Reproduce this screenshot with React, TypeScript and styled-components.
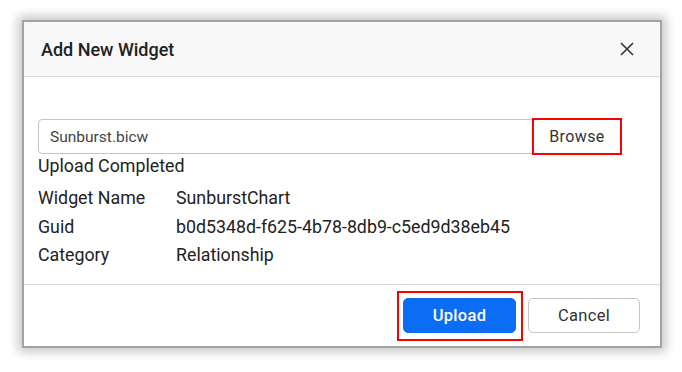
import styled, { createGlobalStyle } from 'styled-components'

const GlobalStyle = createGlobalStyle`
  html, body {
    margin: 0;
    padding: 0;
    background: #ffffff;
    font-family: Roboto, 'Liberation Sans', sans-serif;
  }
`

const Page = styled.div`
  width: 682px;
  height: 372px;
  padding: 22px 0 0 24px;
  box-sizing: border-box;
`

const Dialog = styled.div`
  width: 636px;
  height: 324px;
  background: #ffffff;
  display: flex;
  flex-direction: column;
  box-shadow: 0 0 0 2px #a3a3a3, 0 0 10px 6px rgba(0, 0, 0, 0.22);
`

const Header = styled.div`
  height: 55px;
  flex: 0 0 auto;
  background: #f8f8f8;
  border-bottom: 1px solid #d6d6d6;
  display: flex;
  align-items: center;
  justify-content: space-between;
  padding: 0 26px 0 17px;
  box-sizing: border-box;
`

const Title = styled.h2`
  margin: 0;
  font-size: 18px;
  font-weight: 500;
  color: #222222;
`

const CloseButton = styled.button`
  border: none;
  background: none;
  padding: 0;
  width: 14px;
  height: 14px;
  display: flex;
  cursor: pointer;
`

const Body = styled.div`
  flex: 1;
  padding: 42px 0 0 14px;
  display: flex;
  flex-direction: column;
`

const InputGroup = styled.div`
  width: 583px;
  height: 35px;
  box-sizing: border-box;
  border: 1px solid #c6c6c6;
  border-radius: 4px;
  display: flex;
  align-items: stretch;
`

const FileName = styled.div`
  flex: 1;
  display: flex;
  align-items: center;
  padding-left: 11px;
  font-size: 15.5px;
  color: #444444;
`

const BrowseButton = styled.button`
  width: 86px;
  border: none;
  background: #ffffff;
  font-family: inherit;
  font-size: 16px;
  letter-spacing: 0.4px;
  color: #333333;
  outline: 2px solid #ff0000;
  outline-offset: 0;
  cursor: pointer;
`

const Status = styled.div`
  margin-top: 0;
  font-size: 17.8px;
  color: #222222;
  line-height: 24px;
`

const InfoList = styled.div`
  margin-top: 8px;
  display: grid;
  grid-template-columns: 138px auto;
  row-gap: 4px;
  font-size: 17.8px;
  line-height: 24.5px;
  color: #222222;
`

const Footer = styled.div`
  height: 62px;
  flex: 0 0 auto;
  border-top: 1px solid #d6d6d6;
  box-sizing: border-box;
  display: flex;
  align-items: center;
  justify-content: flex-end;
  gap: 5px;
  padding: 0 20px 0 0;
`

const Highlight = styled.div`
  border: 2px solid #ff0000;
  padding: 5px 5px 6px 4px;
  display: flex;
`

const FooterButton = styled.button<{ primary?: boolean }>`
  height: 35px;
  width: ${({ primary }) => (primary ? 113 : 112)}px;
  border-radius: 5px;
  font-family: inherit;
  font-size: 16.5px;
  font-weight: ${({ primary }) => (primary ? 500 : 400)};
  letter-spacing: 0.3px;
  cursor: pointer;
  border: 1px solid ${({ primary }) => (primary ? '#0b6cf4' : '#c4c4c4')};
  background: ${({ primary }) => (primary ? '#0b6cf4' : '#ffffff')};
  color: ${({ primary }) => (primary ? '#ffffff' : '#333333')};
`

const details = [
  { label: 'Widget Name', value: 'SunburstChart' },
  { label: 'Guid', value: 'b0d5348d-f625-4b78-8db9-c5ed9d38eb45' },
  { label: 'Category', value: 'Relationship' },
]

export default function App() {
  return (
    <>
      <GlobalStyle />
      <Page>
        <Dialog>
          <Header>
            <Title>Add New Widget</Title>
            <CloseButton aria-label="Close">
              <svg width="14" height="14" viewBox="0 0 14 14">
                <path
                  d="M1 1L13 13M13 1L1 13"
                  stroke="#333333"
                  strokeWidth="1.6"
                  fill="none"
                />
              </svg>
            </CloseButton>
          </Header>
          <Body>
            <InputGroup>
              <FileName>Sunburst.bicw</FileName>
              <BrowseButton>Browse</BrowseButton>
            </InputGroup>
            <Status>Upload Completed</Status>
            <InfoList>
              {details.map((d) => (
                <>
                  <span key={d.label}>{d.label}</span>
                  <span key={d.value}>{d.value}</span>
                </>
              ))}
            </InfoList>
          </Body>
          <Footer>
            <Highlight>
              <FooterButton primary>Upload</FooterButton>
            </Highlight>
            <FooterButton>Cancel</FooterButton>
          </Footer>
        </Dialog>
      </Page>
    </>
  )
}
